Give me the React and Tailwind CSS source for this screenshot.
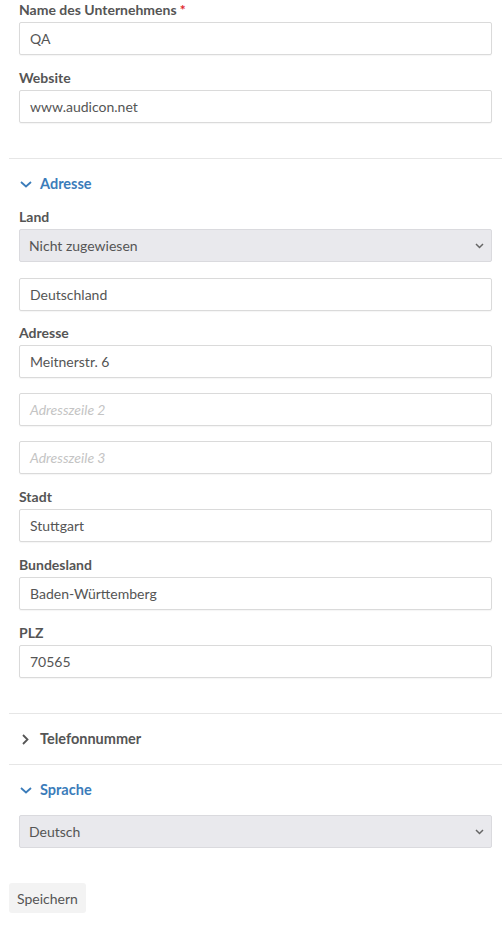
import React from "react";

const font = { fontFamily: "Lato, 'Open Sans', sans-serif" };

const Label = ({ children, required }) => (
  <div className="text-[14px] leading-[19px] font-bold text-[#555] mb-[3px]">
    {children}
    {required && <span className="text-[#e0262d] ml-[3px]">*</span>}
  </div>
);

const TextInput = ({ value, placeholder, className = "" }) => (
  <div
    className={`h-[33px] border border-[#dadada] rounded-[2px] bg-white px-[10px] flex items-center text-[14px] shadow-[0_1px_1px_rgba(0,0,0,0.04)] ${className}`}
  >
    {value ? (
      <span className="text-[#555]">{value}</span>
    ) : (
      <span className="text-[#c4c4c4] italic">{placeholder}</span>
    )}
  </div>
);

const Select = ({ value, className = "" }) => (
  <div
    className={`h-[33px] border border-[#dadade] rounded-[2px] bg-[#e9e9ed] pl-[9px] pr-[7px] flex items-center justify-between text-[14px] text-[#555] ${className}`}
  >
    <span>{value}</span>
    <svg width="9" height="6" viewBox="0 0 9 6" fill="none">
      <path d="M1 1l3.5 3.5L8 1" stroke="#666" strokeWidth="1.5" />
    </svg>
  </div>
);

const SectionHeader = ({ title, open }) => (
  <div className="flex items-center h-[20px] pl-[10px]">
    <div className="w-[21px] flex items-center justify-start pl-[1px]">
      {open ? (
        <svg width="12" height="7" viewBox="0 0 12 7" fill="none">
          <path d="M1 1l5 4.5L11 1" stroke="#3b7cba" strokeWidth="1.8" />
        </svg>
      ) : (
        <svg width="7" height="11" viewBox="0 0 7 11" fill="none" className="ml-[2px]">
          <path d="M1 1l4.5 4.5L1 10" stroke="#555" strokeWidth="1.8" />
        </svg>
      )}
    </div>
    <span
      className={`text-[14.5px] font-bold ${open ? "text-[#3b7cba]" : "text-[#555]"}`}
    >
      {title}
    </span>
  </div>
);

const Divider = () => <div className="h-px bg-[#e6e6e6]" />;

export default function App() {
  return (
    <div className="w-[502px] min-h-[926px] bg-white pl-[9px]" style={font}>
      {/* Company */}
      <div className="px-[10px] pb-[35px]">
        <Label required>Name des Unternehmens</Label>
        <TextInput value="QA" className="mb-[13px]" />
        <Label>Website</Label>
        <TextInput value="www.audicon.net" />
      </div>
      <Divider />

      {/* Adresse */}
      <div className="pt-[15px] pb-[35px]">
        <SectionHeader title="Adresse" open />
        <div className="px-[10px] mt-[13px]">
          <Label>Land</Label>
          <Select value="Nicht zugewiesen" />
          <TextInput value="Deutschland" className="mt-[16px] mb-[12px]" />
          <Label>Adresse</Label>
          <TextInput value="Meitnerstr. 6" />
          <TextInput placeholder="Adresszeile 2" className="mt-[15px]" />
          <TextInput placeholder="Adresszeile 3" className="mt-[15px] mb-[13px]" />
          <Label>Stadt</Label>
          <TextInput value="Stuttgart" className="mb-[13px]" />
          <Label>Bundesland</Label>
          <TextInput value="Baden-Württemberg" className="mb-[13px]" />
          <Label>PLZ</Label>
          <TextInput value="70565" />
        </div>
      </div>
      <Divider />

      {/* Telefonnummer */}
      <div className="pt-[15px] pb-[15px]">
        <SectionHeader title="Telefonnummer" />
      </div>
      <Divider />

      {/* Sprache */}
      <div className="pt-[15px] pb-[35px]">
        <SectionHeader title="Sprache" open />
        <div className="px-[10px] mt-[15px]">
          <Select value="Deutsch" />
        </div>
      </div>

      <button className="h-[30px] w-[77px] bg-[#f3f3f3] rounded-[3px] text-[14px] text-[#555]">
        Speichern
      </button>
    </div>
  );
}
